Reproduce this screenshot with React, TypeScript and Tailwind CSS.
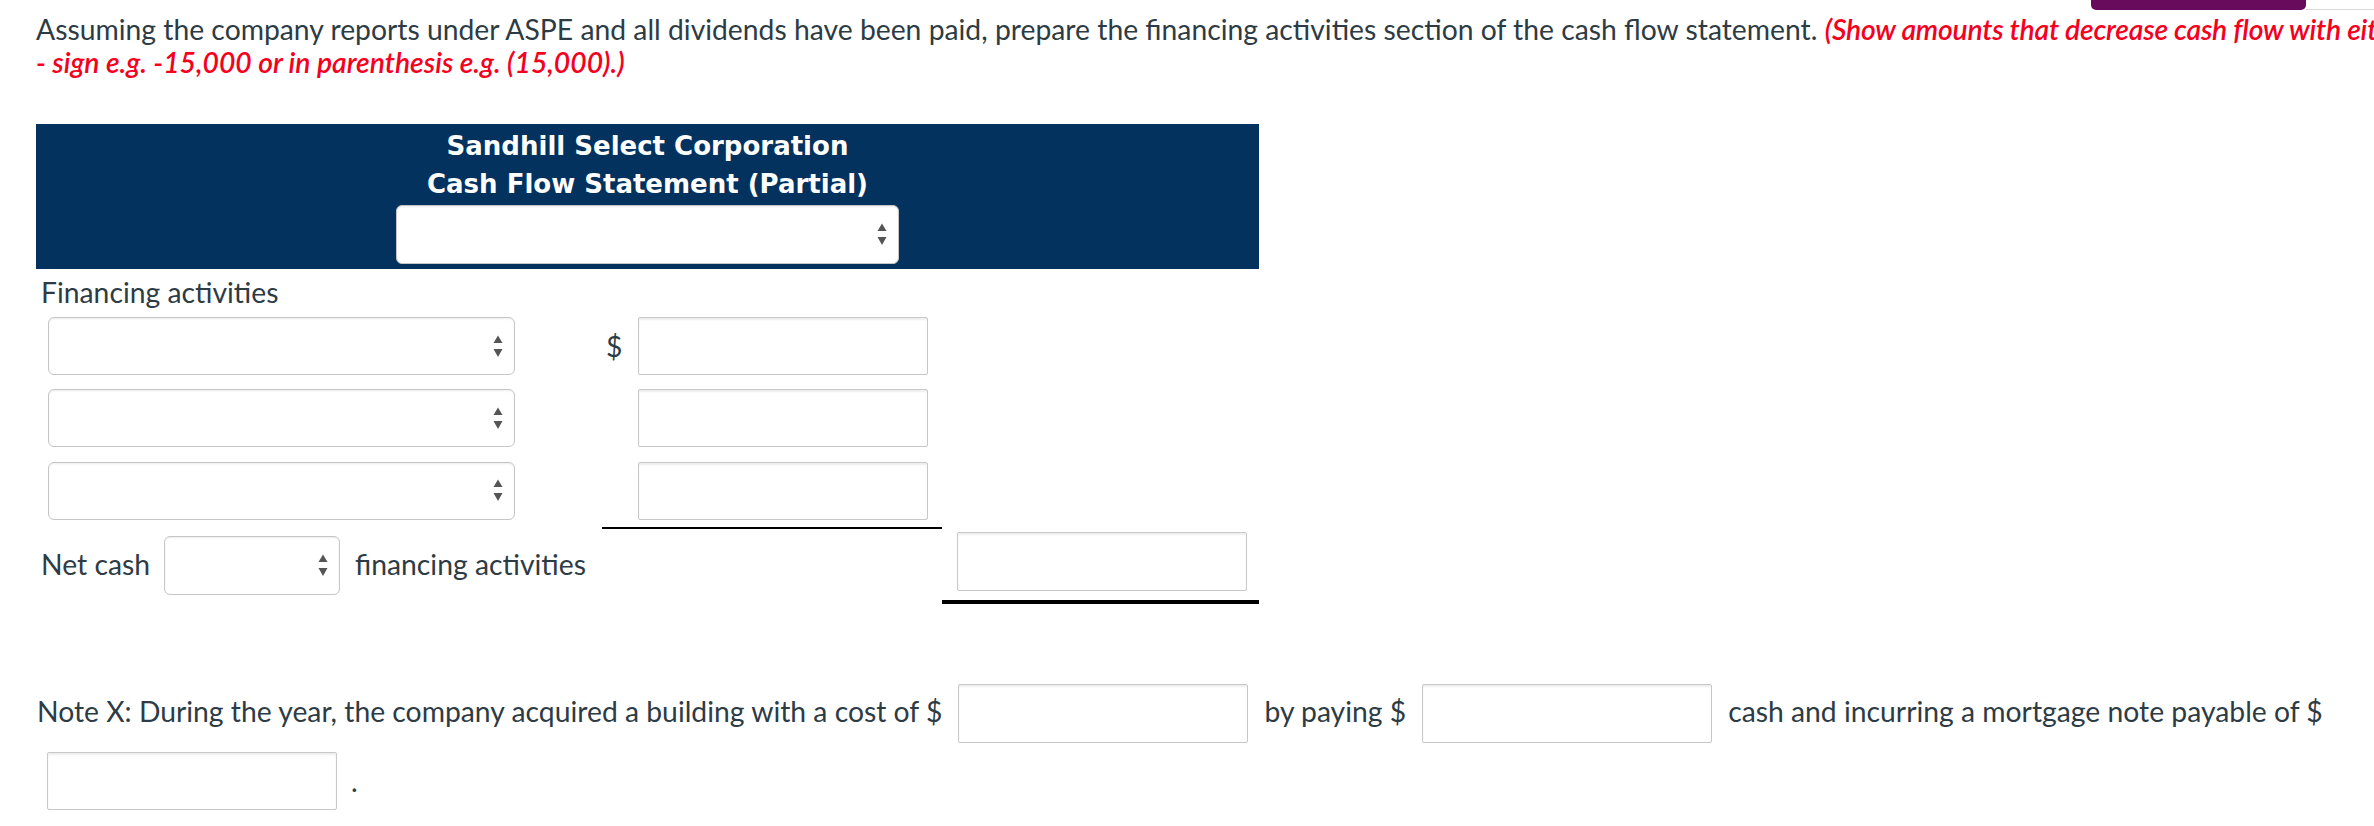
import React from 'react';

const Arrows = () => (
  <svg width="10" height="23" viewBox="0 0 10 23" className="shrink-0">
    <path d="M5 0.5 L9.5 8 L0.5 8 Z" fill="#555" />
    <path d="M0.5 14 L9.5 14 L5 22 Z" fill="#555" />
  </svg>
);

function Select({ className }: { className: string }) {
  return (
    <div
      className={`flex items-center justify-end rounded-[6px] border border-[#c6c6c6] bg-white pr-[11px] shadow-[inset_0_1px_2px_rgba(0,0,0,0.08)] ${className}`}
    >
      <Arrows />
    </div>
  );
}

function Field({ className }: { className: string }) {
  return (
    <input
      aria-label="answer"
      className={`w-[290px] shrink-0 rounded-[2px] border border-[#c8c8c8] bg-white shadow-[inset_0_2px_2px_rgba(0,0,0,0.07)] outline-none ${className}`}
    />
  );
}

export default function App() {
  return (
    <div className="min-h-screen w-full overflow-hidden bg-white text-[28.3px] text-[#2d3b45] [font-family:Lato,sans-serif]">
      {/* toolbar sliver at the top edge */}
      <div className="flex h-[10px] justify-end">
        <div className="w-[215px] rounded-b-[5px] bg-[#690b5c]" />
        <div className="w-[68px] border-b border-[#d9d9d9]" />
      </div>

      <div className="pl-[36px]">
        <p className="pt-[3px] leading-[33px]">
          <span className="block whitespace-nowrap">
            Assuming the company reports under ASPE and all dividends have been paid, prepare the financing
            activities section of the cash flow statement.{' '}
            <span className="font-semibold italic tracking-[-0.2px] text-[#f5001d]">
              (Show amounts that decrease cash flow with either a
            </span>
          </span>
          <span className="block font-semibold italic text-[#f5001d]">
            - sign e.g. -15,000 or in parenthesis e.g. (15,000).)
          </span>
        </p>

        <div className="mt-[45px] w-[1223px]">
          {/* statement heading */}
          <div className="flex h-[145px] flex-col items-center bg-[#04325f] pt-[3px] text-white">
            <div className="text-center text-[26px] font-bold leading-[38px] [font-family:DejaVu_Sans,sans-serif]">
              <div>Sandhill Select Corporation</div>
              <div>Cash Flow Statement (Partial)</div>
            </div>
            <Select className="mt-[2px] h-[59px] w-[503px]" />
          </div>

          <div className="pl-[5px] pt-[6px] leading-[35px]">Financing activities</div>

          {[0, 1, 2].map((i) => (
            <div key={i} className={i === 2 ? 'flex h-[75px]' : 'flex h-[72px]'}>
              <div className={i === 2 ? 'flex w-[566px] items-center pb-[2px] pl-[12px]' : 'flex w-[566px] items-center pl-[12px]'}>
                <Select className="h-[58px] w-[467px]" />
              </div>
              <div
                className={
                  i === 2
                    ? 'flex w-[340px] items-center border-b-2 border-black pl-[4px]'
                    : 'flex w-[340px] items-center pl-[4px]'
                }
              >
                <span className="w-[32px] leading-[34px]">{i === 0 ? '$' : ''}</span>
                <Field className="h-[58px]" />
              </div>
              <div className="w-[317px]" />
            </div>
          ))}

          {/* total row */}
          <div className="flex h-[75px]">
            <div className="flex w-[566px] items-center pb-[6px] pl-[5px]">
              <span className="leading-[34px]">Net cash</span>
              <Select className="ml-[14px] mt-[4px] h-[59px] w-[176px]" />
              <span className="ml-[15px] leading-[34px]">financing activities</span>
            </div>
            <div className="w-[340px]" />
            <div className="w-[317px] border-b-4 border-black pl-[15px] pt-[3px]">
              <Field className="h-[59px]" />
            </div>
          </div>
        </div>

        {/* non-cash note */}
        <div className="mt-[80px] flex flex-wrap items-center gap-y-[9px] pl-[1px] leading-[34px]">
          <span className="-mt-[6px] whitespace-nowrap">
            Note X: During the year, the company acquired a building with a cost of $
          </span>
          <Field className="mx-[16px] h-[59px]" />
          <span className="-mt-[6px] whitespace-nowrap">by paying $</span>
          <Field className="mx-[16px] h-[59px]" />
          <span className="-mt-[6px] whitespace-nowrap">cash and incurring a mortgage note payable of $</span>
          <div className="ml-[10px] flex items-center">
            <Field className="h-[58px]" />
            <span className="ml-[14px]">.</span>
          </div>
        </div>
      </div>
    </div>
  );
}
